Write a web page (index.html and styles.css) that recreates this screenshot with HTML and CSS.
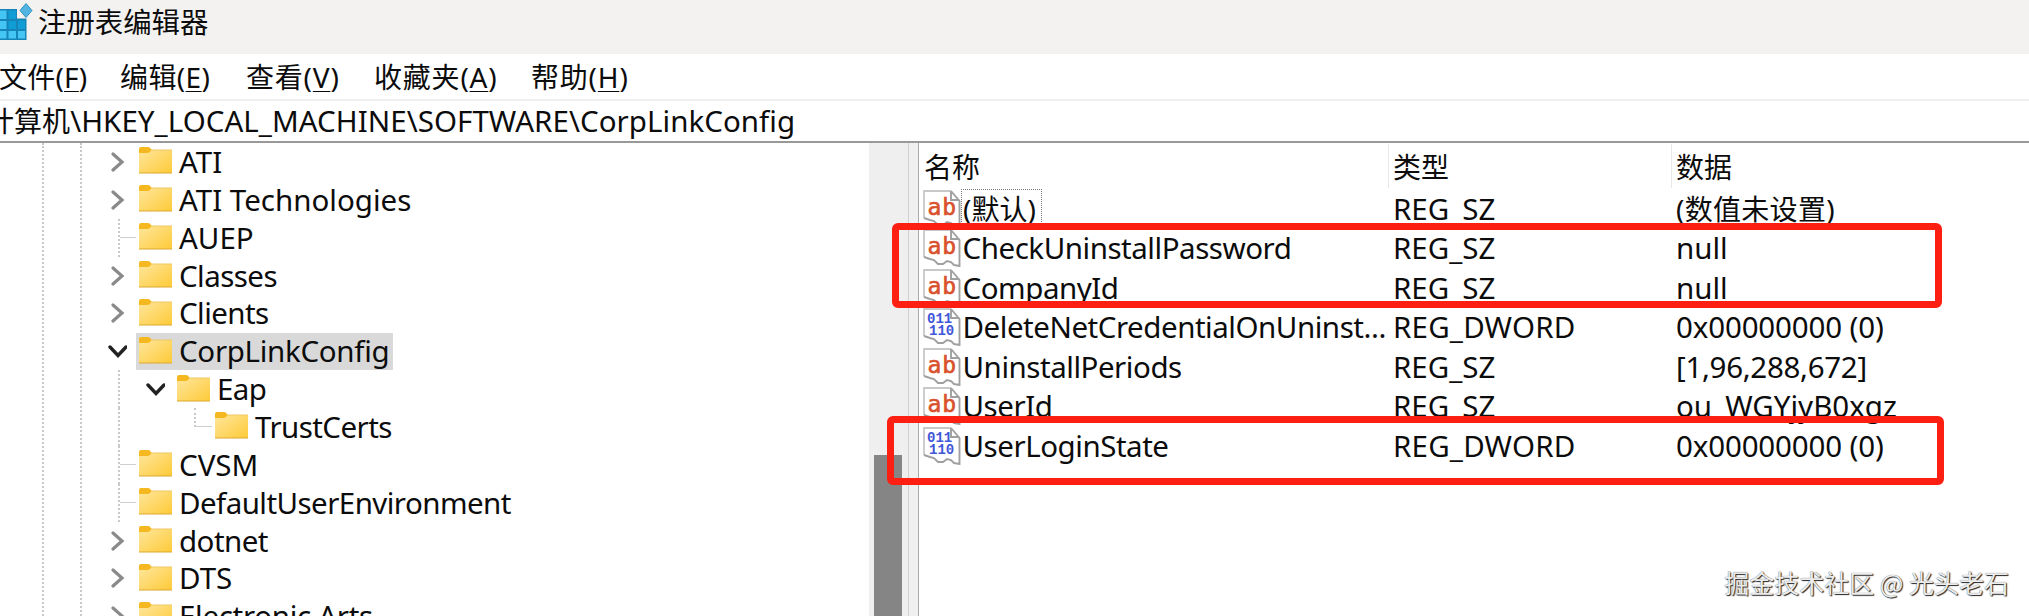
FILE: index.html
```html
<!DOCTYPE html>
<html lang="zh-CN">
<head>
<meta charset="utf-8">
<title>注册表编辑器</title>
<link rel="stylesheet" href="styles.css">
</head>
<body>
<svg class="defs" width="0" height="0">
  <defs>
    <linearGradient id="fold" x1="0" y1="0" x2="1" y2="1"><stop offset="0" stop-color="#ffe69c"/><stop offset="1" stop-color="#fdca38"/></linearGradient>
    <symbol id="folder" viewBox="0 0 33 27"><path d="M0 2Q0 0 2 0H9Q11 0 12 2L13 3V8H0Z" fill="#f6b820"/><path d="M0 6H9Q11 6 12.500 3H33V26H0Z" fill="url(#fold)"/><path d="M12.500 3H33" stroke="#efc765" stroke-width="1"/><path d="M0 26H33" stroke="#dca92e" stroke-width="1"/></symbol>
    <symbol id="right" viewBox="0 0 20 20"><path d="M6 2L15 10L6 18" fill="none" stroke="#8a8a8a" stroke-width="3.200" stroke-linecap="round"/></symbol>
    <symbol id="down" viewBox="0 0 20 20"><path d="M3 6L11 14.500L19 6" fill="none" stroke="#222" stroke-width="3.400" stroke-linecap="round"/></symbol>
    <symbol id="page" viewBox="0 0 38 38"><path d="M1 1H28L37 11V37L31 36L28 33L24 32L20 35H15L11 31L7 30L1 28Z" fill="#fff"/><path d="M1 28V1H28" fill="none" stroke="#c8c8c8" stroke-width="1.800"/><path d="M28 1V10H36.500M28 1L36.500 11V37L31 36L28 33L24 32L20 35H15L11 31L7 30L1 28" fill="none" stroke="#a0a0a0" stroke-width="1.900"/></symbol>
  </defs>
</svg>
<div class="window">
  <header class="titlebar">
    <svg class="appicon" width="33" height="42" viewBox="0 0 33 42">
      <path d="M0 9H17V18.500H26.500V40H0Z" fill="#1585b8"/>
      <path d="M0 10.500H6.500V19H0ZM0 21H6.500V29H0ZM0 31H6.500V38.500H0ZM8.500 31H16V38.500H8.500ZM18 31H25V38.500H18Z" fill="#45c5f4"/>
      <path d="M8.500 10.500H16V19H8.500ZM8.500 21H16V29H8.500ZM18 20.500H25V29H18Z" fill="#109dd6"/>
      <path d="M26 3.500L32 10.500L26 17.500L20 10.500Z" fill="#53b4e2" stroke="#3191c0"/>
    </svg>
    <span class="title">注册表编辑器</span>
  </header>
  <nav class="menu">
    <span class="m1">文件(<u>F</u>)</span><span class="m2">编辑(<u>E</u>)</span><span class="m3">查看(<u>V</u>)</span><span class="m4">收藏夹(<u>A</u>)</span><span class="m5">帮助(<u>H</u>)</span>
  </nav>
  <div class="address"><span class="path"><span class="cn">计算机</span><span>\HKEY_LOCAL_MACHINE\SOFTWARE\CorpLinkConfig</span></span></div>
  <main class="panes">
    <section class="tree">
      <i class="guide g1"></i><i class="guide g2"></i>
      <div class="node"><svg class="chev"><use href="#right"/></svg><span class="item"><svg class="folder"><use href="#folder"/></svg><span>ATI</span></span></div>
      <div class="node"><svg class="chev"><use href="#right"/></svg><span class="item"><svg class="folder"><use href="#folder"/></svg><span>ATI Technologies</span></span></div>
      <div class="node"><i class="branch"></i><span class="item"><svg class="folder"><use href="#folder"/></svg><span>AUEP</span></span></div>
      <div class="node"><svg class="chev"><use href="#right"/></svg><span class="item"><svg class="folder"><use href="#folder"/></svg><span class="tight">Classes</span></span></div>
      <div class="node"><svg class="chev"><use href="#right"/></svg><span class="item"><svg class="folder"><use href="#folder"/></svg><span class="tight">Clients</span></span></div>
      <div class="node"><svg class="chev"><use href="#down"/></svg><span class="item selected"><svg class="folder"><use href="#folder"/></svg><span class="snug">CorpLinkConfig</span></span></div>
      <div class="node lvl1"><i class="line"></i><svg class="chev"><use href="#down"/></svg><span class="item"><svg class="folder"><use href="#folder"/></svg><span class="tight">Eap</span></span></div>
      <div class="node lvl2"><i class="line"></i><i class="branch last"></i><span class="item"><svg class="folder"><use href="#folder"/></svg><span class="tight">TrustCerts</span></span></div>
      <div class="node"><i class="branch"></i><span class="item"><svg class="folder"><use href="#folder"/></svg><span>CVSM</span></span></div>
      <div class="node"><i class="branch"></i><span class="item"><svg class="folder"><use href="#folder"/></svg><span class="tight">DefaultUserEnvironment</span></span></div>
      <div class="node"><svg class="chev"><use href="#right"/></svg><span class="item"><svg class="folder"><use href="#folder"/></svg><span class="tight">dotnet</span></span></div>
      <div class="node"><svg class="chev"><use href="#right"/></svg><span class="item"><svg class="folder"><use href="#folder"/></svg><span>DTS</span></span></div>
      <div class="node"><svg class="chev"><use href="#right"/></svg><span class="item"><svg class="folder"><use href="#folder"/></svg><span class="snug">Electronic Arts</span></span></div>
    </section>
    <div class="scroll"><div class="thumb"></div></div>
    <div class="splitter"></div>
    <section class="values">
      <div class="row head"><span>名称</span><span>类型</span><span>数据</span></div>
      <div class="row"><span class="name"><svg class="vicon"><use href="#page"/><text class="ab" x="4.500" y="25">ab</text></svg><span class="focus">(默认)</span></span><span>REG_SZ</span><span class="cn wide">(数值未设置)</span></div>
      <div class="row"><span class="name"><svg class="vicon"><use href="#page"/><text class="ab" x="4.500" y="25">ab</text></svg><span class="label">CheckUninstallPassword</span></span><span>REG_SZ</span><span>null</span></div>
      <div class="row"><span class="name"><svg class="vicon"><use href="#page"/><text class="ab" x="4.500" y="25">ab</text></svg><span class="label">CompanyId</span></span><span>REG_SZ</span><span>null</span></div>
      <div class="row"><span class="name"><svg class="vicon"><use href="#page"/><text class="bin" x="4" y="15">011</text><text class="bin" x="6" y="27">110</text></svg><span class="label">DeleteNetCredentialOnUninst...</span></span><span class="dword">REG_DWORD</span><span class="num">0x00000000 (0)</span></div>
      <div class="row"><span class="name"><svg class="vicon"><use href="#page"/><text class="ab" x="4.500" y="25">ab</text></svg><span class="label">UninstallPeriods</span></span><span>REG_SZ</span><span class="snug">[1,96,288,672]</span></div>
      <div class="row"><span class="name"><svg class="vicon"><use href="#page"/><text class="ab" x="4.500" y="25">ab</text></svg><span class="label">UserId</span></span><span>REG_SZ</span><span>ou_WGYjyB0xgz</span></div>
      <div class="row"><span class="name"><svg class="vicon"><use href="#page"/><text class="bin" x="4" y="15">011</text><text class="bin" x="6" y="27">110</text></svg><span class="label">UserLoginState</span></span><span class="dword">REG_DWORD</span><span class="num">0x00000000 (0)</span></div>
    </section>
  </main>
  <div class="mark mark1"></div>
  <div class="mark mark2"></div>
  <div class="watermark">掘金技术社区 @ 光头老石</div>
</div>
</body>
</html>
```
FILE: styles.css
```css
* { box-sizing: border-box; }
body { margin: 0; background: #fff; }
.defs { position: absolute; }
.window {
  position: relative;
  width: 2029px;
  height: 616px;
  overflow: hidden;
  display: flex;
  flex-direction: column;
  color: #0c0c0c;
  font: 29.5px/38px "Noto Sans", "Noto Sans CJK SC", sans-serif;
  white-space: nowrap;
}
.titlebar {
  height: 54px;
  flex: none;
  display: flex;
  background: #f3f2f1;
}
.appicon { flex: none; }
.title { margin-left: 5px; padding-top: 2px; font: 28.4px/38px "Noto Sans CJK SC", sans-serif; }
.menu {
  height: 47px;
  flex: none;
  display: flex;
  align-items: center;
  border-bottom: 2px solid #f0f0f0;
  font-size: 28px;
}
.menu span { flex: none; letter-spacing: 0.8px; }
.menu .m1 { width: 121px; letter-spacing: 0.2px; margin-left: -1px; }
.menu .m2 { width: 126px; letter-spacing: 0.4px; }
.m3 { width: 128px; }
.m4 { width: 157px; }
.menu u { text-decoration-thickness: 1px; text-underline-offset: 3px; }
.address {
  height: 42px;
  flex: none;
  display: flex;
  align-items: center;
  border-bottom: 2px solid #999;
}
.path { display: flex; margin-left: -14px; letter-spacing: 0.050px; }
.cn { font-size: 28px; }
.wide { letter-spacing: 0.3px; }
.panes { flex: 1; min-height: 0; display: flex; }
.tree { position: relative; width: 869px; flex: none; overflow: hidden; }
.guide { position: absolute; top: 0; bottom: 0; border-left: 2px dotted #c9c9c9; }
.g1 { left: 42px; }
.g2 { left: 80px; }
.node { position: relative; height: 37.870px; padding-left: 107px; display: flex; align-items: center; }
.lvl1 { padding-left: 145px; }
.lvl2 { padding-left: 183px; }
.chev { width: 20px; height: 20px; flex: none; margin-right: 9px; }
.branch { width: 18px; height: 37.870px; flex: none; margin: 0 0 0 11px; border-left: 2px dotted #c9c9c9; background: linear-gradient(#cfcfcf, #cfcfcf) 0 18px / 100% 1px no-repeat; }
.branch.last { height: 19px; align-self: flex-start; border-bottom: 1px solid #cfcfcf; background: none; }
.line { position: absolute; left: 118px; top: 0; bottom: 0; border-left: 2px dotted #c9c9c9; }
.item { height: 37px; display: flex; align-items: center; padding: 0 4px 0 3px; }
.selected { background: #d9d9d9; }
.folder { width: 33px; height: 27px; flex: none; margin-right: 7px; margin-top: -2px; }
.tight { letter-spacing: -0.55px; }
.snug { letter-spacing: -0.3px; }
.scroll { width: 39px; flex: none; background: #efefef; padding: 312px 6px 0 5px; }
.thumb { height: 200px; background: #858585; }
.splitter { width: 11px; flex: none; background: #f0f0f0; border-left: 1px solid #d0d0d0; border-right: 1px solid #aaa; }
.values { flex: 1; padding-left: 4px; min-width: 0; }
.row { height: 39.500px; display: grid; grid-template-columns: 470px 283px 1fr; align-items: center; }
.head { height: 46px; font-size: 28px; padding-left: 1px; grid-template-columns: 464px 283px 1fr; }
.head span + span { height: 44px; line-height: 46px; border-left: 1px solid #e8e8e8; padding-left: 4px; }
.head span:first-child { padding-top: 1px; }
.name { display: flex; align-items: center; height: 39.500px; }
.vicon { width: 38px; height: 38px; flex: none; }
.vicon use { width: 38px; height: 38px; }
.label { letter-spacing: -0.46px; padding-left: 1.500px; }
.dword { letter-spacing: 0.2px; }
.num { letter-spacing: -0.15px; }
.ab { font: 23px "DejaVu Sans Mono", monospace; letter-spacing: 1px; fill: #d9512c; stroke: #d9512c; stroke-width: 0.6px; }
.bin { font: 700 14px "Liberation Mono", monospace; fill: #3f57d8; }
.focus { height: 39px; border: 1px dotted #777; padding: 0 5px 0 1px; font-size: 28px; }
.mark { position: absolute; border: 7px solid #fd1f12; border-radius: 6px; }
.mark1 { left: 892px; top: 223px; width: 1050px; height: 85px; }
.mark2 { left: 887px; top: 416px; width: 1057px; height: 69px; }
.watermark {
  position: absolute;
  right: 20px;
  top: 563px;
  color: #ececec;
  font: 25px/38px "Noto Sans CJK SC", sans-serif;
  text-shadow: 1px 1px 1px #222, 0 0 1px #555;
}
```
